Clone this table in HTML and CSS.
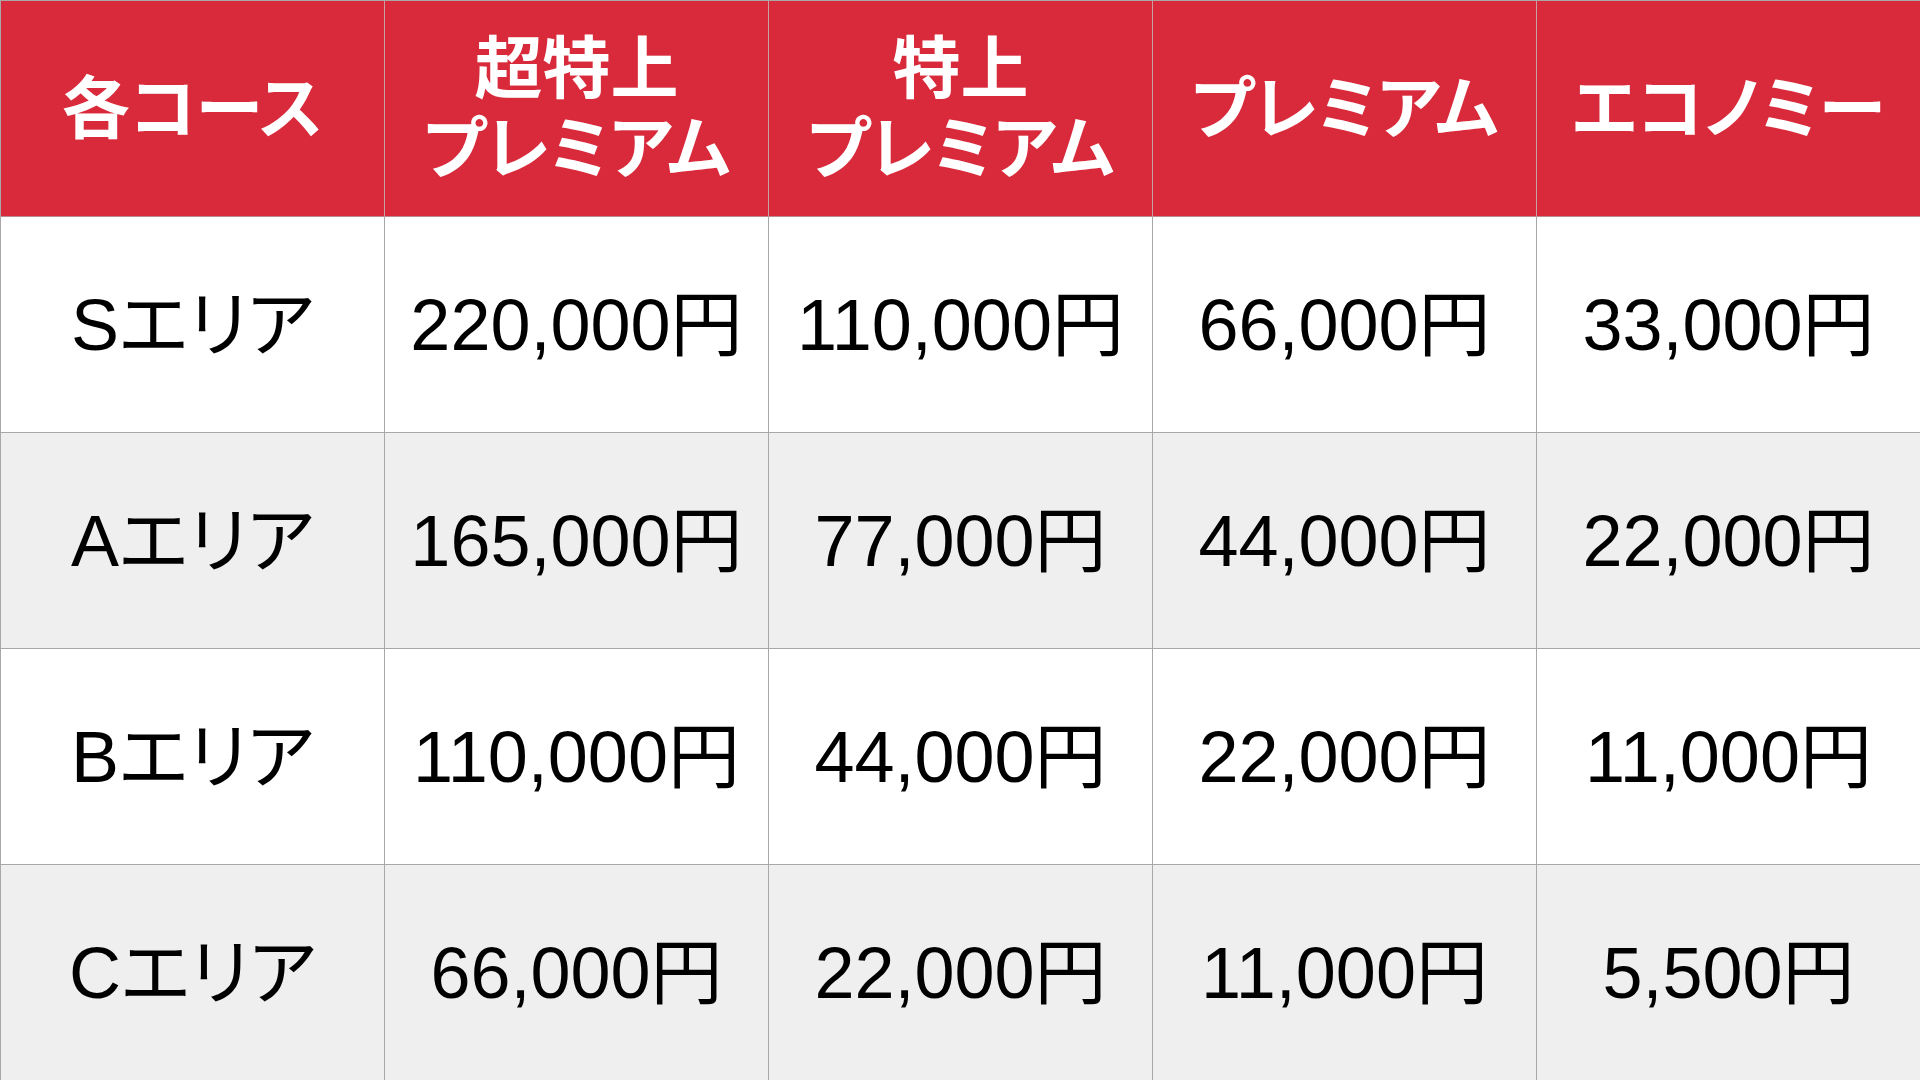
FILE: index.html
```html
<!DOCTYPE html>
<html lang="ja">
<head>
<meta charset="utf-8">
<title>料金表</title>
<link rel="stylesheet" href="styles.css">
</head>
<body>
<div class="price-table" role="table">
  <div class="cell head" role="columnheader"><span class="line">各コース</span></div>
  <div class="cell head" role="columnheader"><span class="line">超特上</span><span class="line">プレミアム</span></div>
  <div class="cell head" role="columnheader"><span class="line">特上</span><span class="line">プレミアム</span></div>
  <div class="cell head" role="columnheader"><span class="line">プレミアム</span></div>
  <div class="cell head" role="columnheader"><span class="line">エコノミー</span></div>

  <div class="cell" role="cell">Sエリア</div>
  <div class="cell" role="cell">220,000円</div>
  <div class="cell" role="cell">110,000円</div>
  <div class="cell" role="cell">66,000円</div>
  <div class="cell" role="cell">33,000円</div>

  <div class="cell alt" role="cell">Aエリア</div>
  <div class="cell alt" role="cell">165,000円</div>
  <div class="cell alt" role="cell">77,000円</div>
  <div class="cell alt" role="cell">44,000円</div>
  <div class="cell alt" role="cell">22,000円</div>

  <div class="cell" role="cell">Bエリア</div>
  <div class="cell" role="cell">110,000円</div>
  <div class="cell" role="cell">44,000円</div>
  <div class="cell" role="cell">22,000円</div>
  <div class="cell" role="cell">11,000円</div>

  <div class="cell alt" role="cell">Cエリア</div>
  <div class="cell alt" role="cell">66,000円</div>
  <div class="cell alt" role="cell">22,000円</div>
  <div class="cell alt" role="cell">11,000円</div>
  <div class="cell alt" role="cell">5,500円</div>
</div>
</body>
</html>
```
FILE: styles.css
```css
html, body {
  margin: 0;
  padding: 0;
  background: #ffffff;
}

body {
  width: 1920px;
  height: 1080px;
  overflow: hidden;
}

.price-table {
  display: grid;
  grid-template-columns: repeat(5, 384px);
  grid-template-rows: repeat(5, 216px);
  border-top: 1px solid #a8a8a8;
  border-left: 1px solid #a8a8a8;
  box-sizing: border-box;
  width: 1920px;
}

.cell {
  box-sizing: border-box;
  border-right: 1px solid #a8a8a8;
  border-bottom: 1px solid #a8a8a8;
  display: flex;
  align-items: center;
  justify-content: center;
  text-align: center;
  padding-bottom: 12px;
  font-family: "Liberation Sans", "Noto Sans CJK JP", sans-serif;
  font-size: 72px;
  color: #000000;
  background: #ffffff;
  font-feature-settings: "palt";
  white-space: nowrap;
}

.cell.alt {
  background: #efefef;
}

.cell.head {
  flex-direction: column;
  background: #d82a3b;
  color: #ffffff;
  font-family: "Noto Sans CJK JP", sans-serif;
  font-weight: 700;
  font-size: 68px;
  padding-bottom: 10px;
  border-right-color: #c7a0a4;
  border-bottom-color: #b98c90;
}

.head .line {
  display: block;
  height: 80px;
  line-height: 80px;
  overflow: visible;
}
```
